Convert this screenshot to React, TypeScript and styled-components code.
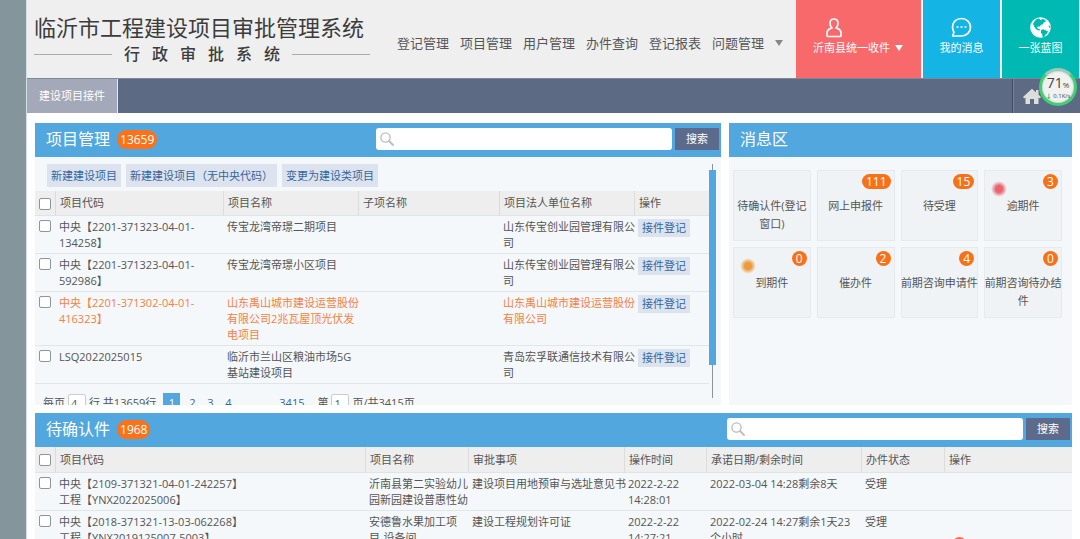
import React from "react";
import styled, { createGlobalStyle } from "styled-components";

const GlobalStyle = createGlobalStyle`
  *, *::before, *::after { box-sizing: border-box; }
  body {
    margin: 0;
    background: #fff;
    color: #555;
    font-family: "Open Sans", "Noto Sans CJK SC", sans-serif;
    font-size: 11px;
    line-height: 16px;
  }
  button, input { font: inherit; }
  h1, h2, p { margin: 0; font-weight: 400; }
  a { color: inherit; text-decoration: none; }
`;

const Shell = styled.div`
  position: relative;
  display: flex;
  height: 100vh;
  overflow: hidden;
`;

const SideStrip = styled.div`
  flex: none;
  width: 27px;
  background: #84959b;
  border-right: 1px solid #d5dfe6;
`;

const Page = styled.div`
  flex: 1;
  min-width: 0;
`;

const Header = styled.header`
  display: flex;
  height: 78px;
  background: #efefef;
`;

const Brand = styled.div`
  flex: none;
  width: 336px;
  margin: 12px 0 0 7px;
  color: #3c3c3c;
`;

const BrandTitle = styled.h1`
  font-size: 22px;
  line-height: 30px;
  font-weight: 400;
  white-space: nowrap;
`;

const BrandSub = styled.div`
  display: flex;
  align-items: center;
  justify-content: space-between;
  gap: 12px;
  font-size: 16px;
  font-weight: 500;
  line-height: 24px;
  &::before, &::after {
    content: "";
    flex: 1;
    height: 1px;
    background: #aaa;
  }
`;

const MainNav = styled.nav`
  flex: 1;
  display: flex;
  align-items: center;
  gap: 11px;
  padding: 8px 0 0 27px;
  font-size: 13px;
  white-space: nowrap;
`;

const Caret = styled.span<{ $color: string }>`
  border: 4px solid transparent;
  border-top: 6px solid ${(p) => p.$color};
  border-bottom: 0;
`;

const Tiles = styled.div`
  flex: none;
  display: flex;
  gap: 2px;
  padding-right: 1px;
  background: #f6f8f8;
`;

const TileButton = styled.button<{ $bg: string; $wide?: boolean }>`
  width: ${(p) => (p.$wide ? 125 : 77)}px;
  padding: 17px 0 0;
  border: 0;
  display: flex;
  flex-direction: column;
  align-items: ${(p) => (p.$wide ? "flex-start" : "center")};
  padding-left: ${(p) => (p.$wide ? 17 : 0)}px;
  gap: 1px;
  color: #fff;
  background: ${(p) => p.$bg};
  svg { margin-left: ${(p) => (p.$wide ? 13 : 0)}px; }
`;

const TileLabel = styled.span`
  display: flex;
  align-items: center;
  gap: 5px;
  line-height: 18px;
`;

const TabBar = styled.div`
  display: flex;
  justify-content: space-between;
  height: 35px;
  background: #5c6b83;
  border-top: 1px solid #7d899b;
`;

const Tab = styled.button`
  width: 91px;
  padding: 0;
  border: 0;
  border-right: 1px solid #e4e7ec;
  background: #a3a9b8;
  color: #fff;
`;

const HomeButton = styled.button`
  width: 68px;
  padding: 4px 0 0 9px;
  border: 0;
  border-left: 1px solid #414c5e;
  box-shadow: inset 1px 0 #76839a;
  background: none;
  text-align: left;
`;

const Gauge = styled.div`
  position: absolute;
  top: 68px;
  right: 3px;
  width: 38px;
  height: 38px;
  padding-top: 5px;
  border: 3px solid #41cf73;
  border-top-color: #9cc9b9;
  border-radius: 50%;
  background: #f0f2f2;
  box-shadow: inset 0 0 2px #9aa;
  color: #444;
  line-height: 14px;
  text-align: center;
  white-space: nowrap;
`;

const GaugeValue = styled.div`
  font-size: 14px;
  small { font-size: 8px; }
`;

const GaugeRate = styled.div`
  font-size: 6px;
  line-height: 8px;
  b { color: #21a552; }
`;

const Main = styled.main`
  display: grid;
  grid-template-columns: 2fr 1fr;
  gap: 8px;
  padding: 10px 8px 0;
`;

const Panel = styled.section<{ $full?: boolean }>`
  min-width: 0;
  background: #f4f8fa;
  grid-column: ${(p) => (p.$full ? "1 / -1" : "auto")};
`;

const PanelHead = styled.div`
  display: flex;
  align-items: center;
  height: 34px;
  padding: 0 2px 2px 11px;
  background: #52a7df;
  color: #fff;
`;

const PanelTitle = styled.h2`
  font-size: 16px;
  line-height: 24px;
`;

const Count = styled.span`
  margin-left: 7px;
  padding: 0 3px;
  border-radius: 10px;
  background: #fb7219;
  font-size: 12px;
  line-height: 19px;
`;

const SearchForm = styled.form`
  display: flex;
  align-items: center;
  gap: 3px;
  margin-left: auto;
`;

const SearchBox = styled.label`
  display: flex;
  align-items: center;
  width: 296px;
  height: 22px;
  padding: 0 4px;
  border-radius: 3px;
  background: #fff;
  input {
    flex: 1;
    min-width: 0;
    padding: 0 4px;
    border: 0;
    outline: 0;
    background: none;
  }
`;

const SearchButton = styled.button`
  width: 44px;
  height: 22px;
  padding: 0;
  border: 0;
  background: #5c6b8b;
  color: #fff;
`;

const ScrollArea = styled.div`
  display: flex;
  height: 248px;
  padding: 7px 5px 0 0;
  overflow: hidden;
`;

const ScrollContent = styled.div`
  flex: 1;
  min-width: 0;
`;

const ScrollTrack = styled.div`
  flex: none;
  width: 7px;
  height: 234px;
  padding-top: 6px;
  background: linear-gradient(#8c9499, #8c9499) 3px 0 / 1px 100% no-repeat;
`;

const ScrollThumb = styled.div`
  height: 195px;
  background: #52a7df;
`;

const Toolbar = styled.div`
  display: flex;
  gap: 5px;
  padding: 0 0 4px 12px;
`;

const ToolButton = styled.button`
  height: 23px;
  padding: 0 4px;
  border: 0;
  background: #dde3ee;
  color: #33669f;
  white-space: nowrap;
`;

const RowButton = styled(ToolButton)`
  display: block;
  height: 18px;
  line-height: 18px;
`;

const Table = styled.table`
  width: 100%;
  table-layout: fixed;
  border-collapse: separate;
  border-spacing: 0;
`;

const Th = styled.th<{ $tall?: boolean }>`
  height: ${(p) => (p.$tall ? 26 : 25)}px;
  padding: 0 0 0 4px;
  border-bottom: 1px solid #e0e4e6;
  border-right: 1px solid #dcdcdc;
  background: #eee;
  font-weight: 400;
  text-align: left;
  white-space: nowrap;
  &:first-child { padding-left: 3px; }
  &:last-child { border-right: 0; }
`;

const Row = styled.tr<{ $alert?: boolean }>`
  color: ${(p) => (p.$alert ? "#f58142" : "inherit")};
`;

const Td = styled.td`
  padding: 3px 0 2px 3px;
  border-bottom: 1px solid #e1e6e9;
  vertical-align: top;
  white-space: pre;
`;

const Check = styled.input`
  display: block;
  width: 12px;
  height: 12px;
  margin: 1px 0 0 1px;
  appearance: none;
  border: 1px solid #8f9599;
  border-radius: 2px;
  background: #fff;
`;

const Pager = styled.div`
  display: flex;
  align-items: center;
  height: 34px;
  padding: 4px 0 0 8px;
  white-space: nowrap;
`;

const PagerInput = styled.input`
  width: 18px;
  height: 18px;
  margin: 0 3px;
  padding: 0 0 0 2px;
  border: 1px solid #c9ced1;
  border-radius: 2px;
  background: #fff;
  color: #555;
`;

const PageLinks = styled.div`
  display: flex;
  align-items: center;
  gap: 6px;
  margin: 0 13px 0 7px;
  color: #33669f;
`;

const PageLink = styled.a<{ $current?: boolean }>`
  min-width: ${(p) => (p.$current ? 17 : 12)}px;
  line-height: 20px;
  text-align: center;
  color: ${(p) => (p.$current ? "#fff" : "inherit")};
  background: ${(p) => (p.$current ? "#52a7df" : "none")};
`;

const PageGap = styled.span`
  width: 33px;
`;

const MessageGrid = styled.div`
  display: grid;
  grid-template-columns: repeat(4, minmax(0, 1fr));
  gap: 6px;
  padding: 13px 10px 0 4px;
`;

const Message = styled.a`
  position: relative;
  height: 71px;
  padding-top: 26px;
  border: 1px solid #e6eaec;
  background: #f0f3f5;
  line-height: 18px;
  text-align: center;
  white-space: pre;
  display: flex;
  justify-content: center;
`;

const MessageCount = styled.span`
  position: absolute;
  top: 3px;
  right: 3px;
  min-width: 15px;
  padding: 0 4px;
  border-radius: 8px;
  background: #f87119;
  color: #fff;
  font-size: 12px;
  line-height: 15px;
`;

const Dot = styled.span<{ $color: string }>`
  position: absolute;
  top: 10px;
  left: 6px;
  width: 16px;
  height: 16px;
  border-radius: 50%;
  background: radial-gradient(circle, ${(p) => p.$color} 30%, transparent 70%);
`;

const FloatDot = styled.span`
  position: absolute;
  right: 113px;
  bottom: -13px;
  width: 15px;
  height: 15px;
  border-radius: 50%;
  background: #fb7250;
`;

const PersonIcon = () => (
  <svg width="16" height="21" viewBox="0 0 16 21" fill="none" stroke="#fff" strokeWidth="1.7" strokeLinejoin="round">
    <path d="M8 2c-2.400 0-4 1.700-4 4.300 0 2 .9 3.700 2 4.600-2.700.7-5 2.600-5 5.400V18.500c0 .6.400 1 1 1h12c.6 0 1-.4 1-1v-2.200c0-2.800-2.300-4.700-5-5.400 1.100-.9 2-2.600 2-4.600C12 3.700 10.400 2 8 2z" />
  </svg>
);

const ChatIcon = () => (
  <svg width="21" height="21" viewBox="0 0 21 21" fill="none" stroke="#fff" strokeWidth="1.700" strokeLinejoin="round">
    <path d="M10.500 1.500c-5.200 0-9 3.700-9 8.500 0 2.200.7 3.900 1.400 5.200L1.700 19h8.800c5.200 0 9-4 9-8.800s-3.800-8.700-9-8.700z" />
    <g fill="#fff" stroke="none">
      <circle cx="6.500" cy="10" r="1.100" />
      <circle cx="10.500" cy="10" r="1.100" />
      <circle cx="14.500" cy="10" r="1.100" />
    </g>
  </svg>
);

const GlobeIcon = () => (
  <svg width="23" height="21" viewBox="0 0 23 23">
    <circle cx="11.500" cy="11.500" r="11.300" fill="#fff" />
    <g fill="#00b9b3">
      <path d="M6 3.400 8.500 1.600l2.200.5.800 1.400 2-1.200 3 .8 1 1.700-2.600 1.200-.4 1.700-2.600 1-1.500 2-1.800-.4-.9 1 .6 1.400 1.900.3.900 1.500-1.500.3-2.900-1.500L4.500 10.400 3.300 7.500z" />
      <path d="M12 14.200l2.600-.9 3 1.500 2 .8-.8 2.600-2 1.300-1.200 2.300-1.700.4-.5-3-1.500-2.300z" />
      <path d="M20.200 9l1.800.8.300 2.200-1.300-.6z" />
    </g>
  </svg>
);

const HomeIcon = () => (
  <svg width="20" height="17" viewBox="0 0 20 17" fill="#dcdddd">
    <path d="M10 .8 1 9l1.300 1.500L3.500 9.500V16H8v-5h4v5h4.500V9.500l1.200 1L19 9l-2.500-2.300V2H14v2.400z" />
  </svg>
);

const SearchIcon = () => (
  <svg width="14" height="14" viewBox="0 0 14 14" fill="none" stroke="#bcbcbc" strokeWidth="1.300" strokeLinecap="round">
    <circle cx="5.500" cy="5.500" r="4.600" />
    <path d="M9 9l4 4" strokeWidth="1.800" />
  </svg>
);

const navItems = ["登记管理", "项目管理", "用户管理", "办件查询", "登记报表", "问题管理"];

const projectColumns = ["项目代码", "项目名称", "子项名称", "项目法人单位名称", "操作"];
const projectWidths = [21, 168, 135, 141, 135, 74];
const projects = [
  { code: "中央【2201-371323-04-01-\n134258】", name: "传宝龙湾帝璟二期项目", owner: "山东传宝创业园管理有限公\n司" },
  { code: "中央【2201-371323-04-01-\n592986】", name: "传宝龙湾帝璟小区项目", owner: "山东传宝创业园管理有限公\n司" },
  { code: "中央【2201-371302-04-01-\n416323】", name: "山东禹山城市建设运营股份\n有限公司2兆瓦屋顶光伏发\n电项目", owner: "山东禹山城市建设运营股份\n有限公司", alert: true },
  { code: "LSQ2022025015", name: "临沂市兰山区粮油市场5G\n基站建设项目", owner: "青岛宏孚联通信技术有限公\n司" },
];

const pendingColumns = ["项目代码", "项目名称", "审批事项", "操作时间", "承诺日期/剩余时间", "办件状态", "操作"];
const pendingWidths = [21, 310, 103, 156, 82, 155, 83, 127];
const pending = [
  ["中央【2109-371321-04-01-242257】\n工程【YNX2022025006】", "沂南县第二实验幼儿\n园新园建设普惠性幼", "建设项目用地预审与选址意见书", "2022-2-22\n14:28:01", "2022-03-04 14:28剩余8天", "受理", ""],
  ["中央【2018-371321-13-03-062268】\n工程【YNX2019125007-5003】", "安德鲁水果加工项\n目-设备间", "建设工程规划许可证", "2022-2-22\n14:27:21", "2022-02-24 14:27剩余1天23\n个小时", "受理", ""],
];

const messages: { label: string; count?: number; dot?: string }[] = [
  { label: "待确认件(登记\n窗口)" },
  { label: "网上申报件", count: 111 },
  { label: "待受理", count: 15 },
  { label: "逾期件", count: 3, dot: "#e86470" },
  { label: "到期件", count: 0, dot: "#ec9a3c" },
  { label: "催办件", count: 2 },
  { label: "前期咨询申请件", count: 4 },
  { label: "前期咨询待办结\n件", count: 0 },
];

const Search = ({ name }: { name: string }) => (
  <SearchForm onSubmit={(e) => e.preventDefault()}>
    <SearchBox>
      <SearchIcon />
      <input type="text" aria-label={name} />
    </SearchBox>
    <SearchButton type="submit">搜索</SearchButton>
  </SearchForm>
);

const TableHead = ({ columns, widths, tall }: { columns: string[]; widths: number[]; tall?: boolean }) => (
  <>
    <colgroup>
      {widths.map((w, i) => (
        <col key={i} width={w} />
      ))}
    </colgroup>
    <thead>
      <tr>
        <Th $tall={tall}>
          <Check type="checkbox" aria-label="全选" />
        </Th>
        {columns.map((c) => (
          <Th key={c} $tall={tall}>{c}</Th>
        ))}
      </tr>
    </thead>
  </>
);

export default function App() {
  return (
    <>
      <GlobalStyle />
      <Shell>
        <SideStrip />
        <Page>
          <Header>
            <Brand>
              <BrandTitle>临沂市工程建设项目审批管理系统</BrandTitle>
              <BrandSub>
                {[..."行政审批系统"].map((c) => (
                  <span key={c}>{c}</span>
                ))}
              </BrandSub>
            </Brand>
            <MainNav>
              {navItems.map((n) => (
                <a key={n} href="#">{n}</a>
              ))}
              <Caret $color="#888" />
            </MainNav>
            <Tiles>
              <TileButton $bg="#f8696c" $wide>
                <PersonIcon />
                <TileLabel>
                  沂南县统一收件
                  <Caret $color="#fff" />
                </TileLabel>
              </TileButton>
              <TileButton $bg="#14b4e5">
                <ChatIcon />
                <TileLabel>我的消息</TileLabel>
              </TileButton>
              <TileButton $bg="#00b9b3">
                <GlobeIcon />
                <TileLabel>一张蓝图</TileLabel>
              </TileButton>
            </Tiles>
          </Header>
          <TabBar>
            <Tab>建设项目接件</Tab>
            <HomeButton aria-label="首页">
              <HomeIcon />
            </HomeButton>
          </TabBar>
          <Main>
            <Panel>
              <PanelHead>
                <PanelTitle>项目管理</PanelTitle>
                <Count>13659</Count>
                <Search name="搜索项目" />
              </PanelHead>
              <ScrollArea>
                <ScrollContent>
                  <Toolbar>
                    <ToolButton>新建建设项目</ToolButton>
                    <ToolButton>新建建设项目（无中央代码）</ToolButton>
                    <ToolButton>变更为建设类项目</ToolButton>
                  </Toolbar>
                  <Table>
                    <TableHead columns={projectColumns} widths={projectWidths} />
                    <tbody>
                      {projects.map((p) => (
                        <Row key={p.code} $alert={p.alert}>
                          <Td>
                            <Check type="checkbox" aria-label={p.name} />
                          </Td>
                          <Td>{p.code}</Td>
                          <Td>{p.name}</Td>
                          <Td />
                          <Td>{p.owner}</Td>
                          <Td>
                            <RowButton>接件登记</RowButton>
                          </Td>
                        </Row>
                      ))}
                    </tbody>
                  </Table>
                  <Pager>
                    每页
                    <PagerInput defaultValue="4" aria-label="每页行数" />
                    行 共13659行
                    <PageLinks>
                      <PageLink href="#" $current>1</PageLink>
                      <PageLink href="#">2</PageLink>
                      <PageLink href="#">3</PageLink>
                      <PageLink href="#">4</PageLink>
                      <PageGap />
                      <PageLink href="#">3415</PageLink>
                    </PageLinks>
                    第
                    <PagerInput defaultValue="1" aria-label="页码" />
                    页/共3415页
                  </Pager>
                </ScrollContent>
                <ScrollTrack>
                  <ScrollThumb />
                </ScrollTrack>
              </ScrollArea>
            </Panel>
            <Panel>
              <PanelHead>
                <PanelTitle>消息区</PanelTitle>
              </PanelHead>
              <MessageGrid>
                {messages.map((m) => (
                  <Message key={m.label} href="#">
                    {m.dot && <Dot $color={m.dot} />}
                    {m.count !== undefined && <MessageCount>{m.count}</MessageCount>}
                    {m.label}
                  </Message>
                ))}
              </MessageGrid>
            </Panel>
            <Panel $full>
              <PanelHead>
                <PanelTitle>待确认件</PanelTitle>
                <Count>1968</Count>
                <Search name="搜索待确认件" />
              </PanelHead>
              <Table>
                <TableHead columns={pendingColumns} widths={pendingWidths} tall />
                <tbody>
                  {pending.map((cells) => (
                    <Row key={cells[0]}>
                      <Td>
                        <Check type="checkbox" aria-label={cells[1]} />
                      </Td>
                      {cells.map((c, i) => (
                        <Td key={i}>{c}</Td>
                      ))}
                    </Row>
                  ))}
                </tbody>
              </Table>
            </Panel>
          </Main>
        </Page>
        <Gauge>
          <GaugeValue>71<small>%</small></GaugeValue>
          <GaugeRate><b>↓</b> 0.1K/s</GaugeRate>
        </Gauge>
        <FloatDot />
      </Shell>
    </>
  );
}
